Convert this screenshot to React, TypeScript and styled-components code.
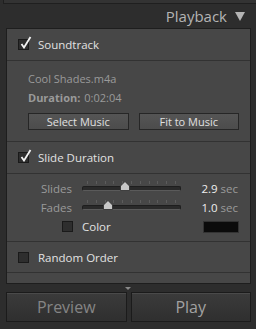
import styled, { createGlobalStyle } from 'styled-components';

const Global = createGlobalStyle`
  body {
    margin: 0;
    background: #2d2d2d;
    font-family: "Open Sans", "DejaVu Sans", sans-serif;
  }
`;

const Frame = styled.div`
  width: 256px;
  height: 329px;
  background: #2d2d2d;
  display: flex;
  flex-direction: column;
  overflow: hidden;
`;

const TopStrip = styled.div`
  height: 3px;
  margin-left: 3px;
  border-left: 1px solid #1f1f1f;
  border-bottom: 1px solid #1f1f1f;
  background: #333;
`;

const Header = styled.div`
  height: 24px;
  display: flex;
  align-items: center;
  justify-content: flex-end;
  gap: 8px;
  padding-right: 11px;
  color: #b4b4b4;
  font-size: 15px;
`;

const Panel = styled.div`
  margin: 0 5px 0 6px;
  background: #474747;
  border: 1px solid #1e1e1e;
  display: flex;
  flex-direction: column;
`;

const Row = styled.div<{ h: number }>`
  height: ${(p) => p.h}px;
  display: flex;
  align-items: center;
  padding-left: 11px;
  gap: 9px;
  border-bottom: 1px solid #323232;
  color: #e2e2e2;
  font-size: 11.5px;
`;

const Box = styled.div`
  width: 9px;
  height: 9px;
  background: #2e2e2e;
  border: 1px solid #1a1a1a;
  position: relative;
  flex: none;
`;

const Tick = styled.svg`
  position: absolute;
  left: 1px;
  top: -4px;
`;

const Section = styled.div<{ h: number }>`
  height: ${(p) => p.h}px;
  border-bottom: 1px solid #323232;
  display: flex;
  flex-direction: column;
`;

const Info = styled.div`
  color: #9a9a9a;
  font-size: 11px;
  padding-left: 21px;
  height: 19px;
  display: flex;
  align-items: center;
  b {
    font-weight: 700;
    margin-right: 4px;
  }
`;

const ButtonRow = styled.div`
  display: flex;
  gap: 10px;
  padding: 0 11px 0 21px;
  margin-top: 6px;
`;

const SmallButton = styled.div`
  flex: 1;
  height: 15px;
  background: linear-gradient(#555, #4c4c4c);
  border: 1px solid #262626;
  color: #e0e0e0;
  font-size: 11px;
  display: flex;
  align-items: center;
  justify-content: center;
`;

const SliderRow = styled.div`
  height: 19px;
  display: flex;
  align-items: center;
  font-size: 11.5px;
`;

const Label = styled.div`
  width: 65px;
  text-align: right;
  color: #9a9a9a;
`;

const Track = styled.div`
  position: relative;
  margin-left: 10px;
  width: 97px;
  height: 3px;
  background: #2a2a2a;
  border: 1px solid #1e1e1e;
  border-bottom-color: #5a5a5a;
  border-radius: 2px;
`;

const Ticks = styled.div`
  position: absolute;
  left: 4px;
  right: 4px;
  top: -6px;
  display: flex;
  justify-content: space-between;
  span {
    width: 1px;
    height: 3px;
    background: #5c5c5c;
  }
`;

const Thumb = styled.svg`
  position: absolute;
  top: -6px;
`;

const Value = styled.div`
  margin-left: auto;
  margin-right: 12px;
  color: #eee;
  span {
    color: #9a9a9a;
    margin-left: 3px;
  }
`;

const ColorRow = styled.div`
  height: 19px;
  display: flex;
  align-items: center;
  padding-left: 55px;
  gap: 9px;
  color: #e2e2e2;
  font-size: 11.5px;
`;

const Swatch = styled.div`
  margin-left: auto;
  margin-right: 11px;
  width: 34px;
  height: 10px;
  background: #0b0b0b;
  border: 1px solid #333;
`;

const Footer = styled.div`
  display: flex;
  flex-direction: column;
  align-items: center;
`;

const Arrow = styled.div`
  width: 0;
  height: 0;
  margin: 3px 0 2px;
  border-left: 3px solid transparent;
  border-right: 3px solid transparent;
  border-top: 3px solid #8a8a8a;
`;

const BigButtons = styled.div`
  display: flex;
  gap: 4px;
  padding: 0 5px 0 6px;
  width: 100%;
  box-sizing: border-box;
`;

const BigButton = styled.div<{ light?: boolean }>`
  flex: 1;
  height: 28px;
  background: linear-gradient(#3b3b3b, #2f2f2f);
  border: 1px solid #1b1b1b;
  box-shadow: inset 0 1px 0 #4a4a4a;
  color: ${(p) => (p.light ? '#a2a2a2' : '#858585')};
  font-size: 16px;
  display: flex;
  align-items: center;
  justify-content: center;
`;

const Check = ({ checked }: { checked?: boolean }) => (
  <Box>
    {checked && (
      <Tick width="12" height="13" viewBox="0 0 12 13">
        <path d="M1.5 8 L4 11.5 L10.5 1" fill="none" stroke="#f2f2f2" strokeWidth="1.8" />
      </Tick>
    )}
  </Box>
);

const Slider = ({ pos }: { pos: number }) => (
  <Track>
    <Ticks>
      {Array.from({ length: 11 }).map((_, i) => (
        <span key={i} />
      ))}
    </Ticks>
    <Thumb width="10" height="10" viewBox="0 0 10 10" style={{ left: pos - 5 }}>
      <path d="M5 0.5 L9.5 5 L9.5 9.5 L0.5 9.5 L0.5 5 Z" fill="#c8c8c8" stroke="#2a2a2a" strokeWidth="0.8" />
    </Thumb>
  </Track>
);

export default function App() {
  return (
    <Frame>
      <Global />
      <TopStrip />
      <Header>
        Playback
        <svg width="10" height="9" viewBox="0 0 10 9">
          <path d="M0 0 L10 0 L5 9 Z" fill="#b4b4b4" />
        </svg>
      </Header>
      <Panel>
        <Row h={31}>
          <Check checked />
          Soundtrack
        </Row>
        <Section h={80}>
          <div style={{ height: 8 }} />
          <Info>Cool Shades.m4a</Info>
          <Info>
            <b>Duration:</b>0:02:04
          </Info>
          <ButtonRow>
            <SmallButton>Select Music</SmallButton>
            <SmallButton>Fit to Music</SmallButton>
          </ButtonRow>
        </Section>
        <Row h={31}>
          <Check checked />
          Slide Duration
        </Row>
        <Section h={67}>
          <div style={{ height: 5 }} />
          <SliderRow>
            <Label>Slides</Label>
            <Slider pos={42} />
            <Value>
              2.9<span>sec</span>
            </Value>
          </SliderRow>
          <SliderRow>
            <Label>Fades</Label>
            <Slider pos={25} />
            <Value>
              1.0<span>sec</span>
            </Value>
          </SliderRow>
          <ColorRow>
            <Check />
            Color
            <Swatch />
          </ColorRow>
        </Section>
        <Row h={30}>
          <Check />
          Random Order
        </Row>
        <div style={{ height: 10 }} />
      </Panel>
      <Footer>
        <Arrow />
        <BigButtons>
          <BigButton>Preview</BigButton>
          <BigButton light>Play</BigButton>
        </BigButtons>
      </Footer>
    </Frame>
  );
}
